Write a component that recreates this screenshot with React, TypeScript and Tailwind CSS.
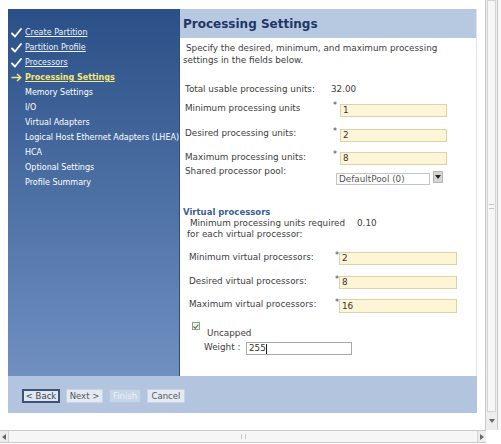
import React from 'react';

const done = ['Create Partition', 'Partition Profile', 'Processors'];
const todo = [
  'Memory Settings',
  'I/O',
  'Virtual Adapters',
  'Logical Host Ethernet Adapters (LHEA)',
  'HCA',
  'Optional Settings',
  'Profile Summary',
];

const Check = () => (
  <svg width="11" height="10" viewBox="0 0 11 10" className="shrink-0">
    <path d="M1 5.5 L4 8.5 L10 1" fill="none" stroke="#ffffff" strokeWidth="1.8" strokeLinecap="round" strokeLinejoin="round" />
  </svg>
);

const Arrow = () => (
  <svg width="11" height="9" viewBox="0 0 11 9" className="shrink-0">
    <path d="M0.5 4.5 H9.5 M6 1 L9.8 4.5 L6 8" fill="none" stroke="#f3e77a" strokeWidth="1.5" strokeLinejoin="round" />
  </svg>
);

const Star = () => <span className="text-[8px] leading-[6px] text-[#444]">*</span>;

export default function App() {
  return (
    <div className="w-[501px] h-[444px] bg-white overflow-hidden flex flex-col" style={{ fontFamily: '"DejaVu Sans", Verdana, sans-serif' }}>
      <div className="flex h-[430px]">
        {/* page */}
        <div className="w-[485px] h-full pl-[8px] pt-[9px] flex flex-col">
          <div className="w-[469px] flex h-[367px]">
            {/* wizard nav */}
            <nav className="w-[172px] shrink-0 h-full bg-gradient-to-b from-[#2a5087] to-[#7090c1] pt-[16px] pl-[3px] text-[8px] leading-[15px] border-r border-[#2c4d7f]">
              {done.map((d) => (
                <div key={d} className="flex items-center h-[15px] gap-[3px]">
                  <Check />
                  <span className="text-[#eef2f8] underline">{d}</span>
                </div>
              ))}
              <div className="flex items-center h-[15px] gap-[3px]">
                <Arrow />
                <span className="text-[#f3e77a] underline font-bold">Processing Settings</span>
              </div>
              {todo.map((d) => (
                <div key={d} className="h-[15px] pl-[14px] text-white whitespace-nowrap">
                  {d}
                </div>
              ))}
            </nav>

            {/* content */}
            <div className="w-[297px] h-full flex flex-col bg-white text-[8.8px] text-[#3c3c3c] border-r border-[#dfe4ea]">
              <div className="h-[29px] bg-[#b7c8e1] pl-[3px] flex items-center">
                <h1 className="text-[12px] font-bold text-[#1d3766] leading-none">Processing Settings</h1>
              </div>

              <div className="flex flex-col">
                <div className="mt-[4px] h-[24px] pl-[3px] leading-[12px]">
                  <div className="pl-[3px]">Specify the desired, minimum, and maximum processing</div>
                  <div>settings in the fields below.</div>
                </div>

                <div className="mt-[17px] h-[12px] pl-[5px] flex leading-[12px]">
                  <div className="w-[146px] shrink-0">Total usable processing units:</div>
                  <div>32.00</div>
                </div>

                <div className="mt-[4px] h-[18px] pl-[5px] grid grid-cols-[148px_7px_107px] items-start">
                  <div className="mt-[3px] leading-[12px] whitespace-nowrap">Minimum processing units</div>
                  <div><Star /></div>
                  <div className="mt-[5px] h-[13px] bg-[#fdf5d6] border border-[#dcd2a8] pl-[2px] flex items-center text-[#333] leading-none">1</div>
                </div>

                <div className="mt-[8px] h-[17px] pl-[5px] grid grid-cols-[148px_7px_107px] items-start">
                  <div className="mt-[2px] leading-[12px] whitespace-nowrap">Desired processing units:</div>
                  <div><Star /></div>
                  <div className="mt-[4px] h-[13px] bg-[#fdf5d6] border border-[#dcd2a8] pl-[2px] flex items-center text-[#333] leading-none">2</div>
                </div>

                <div className="mt-[6px] h-[17px] pl-[5px] grid grid-cols-[148px_7px_107px] items-start">
                  <div className="mt-[3px] leading-[12px] whitespace-nowrap">Maximum processing units:</div>
                  <div><Star /></div>
                  <div className="mt-[4px] h-[13px] bg-[#fdf5d6] border border-[#dcd2a8] pl-[2px] flex items-center text-[#333] leading-none">8</div>
                </div>

                <div className="h-[20px] pl-[5px] flex items-start">
                  <div className="w-[151px] shrink-0 leading-[12px]">Shared processor pool:</div>
                  <div className="mt-[8px] shrink-0 w-[94px] h-[12px] bg-white border border-[#c4c4c4] pl-[2px] flex items-center text-[#555] leading-none">
                    DefaultPool (0)
                  </div>
                  <div className="mt-[6px] ml-[3px] shrink-0 w-[10px] h-[12px] bg-[#d6d6d6] border border-[#b5b5b5] flex items-center justify-center">
                    <svg width="6" height="4" viewBox="0 0 6 4"><path d="M0 0 H6 L3 4 Z" fill="#222" /></svg>
                  </div>
                </div>

                <div className="mt-[21px] h-[12px] pl-[3px] leading-[12px] text-[8.5px] font-bold text-[#3a5f91]">
                  Virtual processors
                </div>

                <div className="h-[22px] pl-[7px] flex leading-[11px]">
                  <div className="w-[170px] shrink-0">
                    <div className="pl-[3px]">Minimum processing units required</div>
                    <div>for each virtual processor:</div>
                  </div>
                  <div>0.10</div>
                </div>

                <div className="mt-[9px] h-[16px] pl-[9px] grid grid-cols-[146px_4px_118px] items-start">
                  <div className="mt-[2px] leading-[12px] whitespace-nowrap">Minimum virtual processors:</div>
                  <div><Star /></div>
                  <div className="mt-[3px] h-[13px] bg-[#fdf5d6] border border-[#dcd2a8] pl-[2px] flex items-center text-[#333] leading-none">2</div>
                </div>

                <div className="mt-[8px] h-[15px] pl-[9px] grid grid-cols-[146px_4px_118px] items-start">
                  <div className="mt-[2px] leading-[12px] whitespace-nowrap">Desired virtual processors:</div>
                  <div><Star /></div>
                  <div className="mt-[3px] h-[13px] bg-[#fdf5d6] border border-[#dcd2a8] pl-[2px] flex items-center text-[#333] leading-none">8</div>
                </div>

                <div className="mt-[8px] h-[17px] pl-[9px] grid grid-cols-[146px_4px_118px] items-start">
                  <div className="mt-[2px] leading-[12px] whitespace-nowrap">Maximum virtual processors:</div>
                  <div><Star /></div>
                  <div className="mt-[3px] h-[14px] bg-[#fdf5d6] border border-[#dcd2a8] pl-[2px] flex items-center text-[#333] leading-none">16</div>
                </div>

                <div className="mt-[9px] h-[17px] pl-[12px] flex items-start">
                  <div className="w-[8px] h-[8px] shrink-0 border border-[#9a9a9a] bg-[#eef3ea] flex items-center justify-center">
                    <svg width="6" height="5" viewBox="0 0 6 5"><path d="M0.5 2.5 L2.3 4.3 L5.5 0.7" fill="none" stroke="#4f8c4f" strokeWidth="1.2" /></svg>
                  </div>
                  <div className="ml-[7px] mt-[5px] leading-[12px]">Uncapped</div>
                </div>

                <div className="mt-[2px] h-[14px] pl-[24px] flex items-start">
                  <div className="w-[42px] shrink-0 leading-[12px]">Weight :</div>
                  <div className="mt-[1px] shrink-0 w-[106px] h-[13px] bg-white border border-[#a8a8a8] pl-[2px] flex items-center text-[#333] leading-none">
                    255<span className="ml-[0.5px] w-px h-[10px] bg-[#222]" />
                  </div>
                </div>
              </div>
            </div>
          </div>

          {/* button bar */}
          <div className="w-[469px] h-[37px] bg-[#b3c5de] pl-[14px] pt-[13px] flex items-start gap-[6px] text-[8.5px] leading-none">
            <button className="w-[38px] h-[14px] bg-[#dfe7f2] border-2 border-[#3c5277] text-[#444] flex items-center justify-center">&lt; Back</button>
            <button className="w-[37px] h-[14px] bg-[#e4eaf3] border border-[#c9d3e2] text-[#555] flex items-center justify-center">Next &gt;</button>
            <button className="w-[32px] h-[14px] bg-[#c6d4e7] border border-[#b9c7db] text-[#eef2f8] flex items-center justify-center">Finish</button>
            <button className="w-[38px] h-[14px] bg-[#e4eaf3] border border-[#c9d3e2] text-[#555] flex items-center justify-center">Cancel</button>
          </div>
        </div>

        {/* vertical scrollbar */}
        <div className="w-[13px] h-full bg-[#ededed] border-x border-[#c9c9c9] flex flex-col">
          <div className="h-[412px] mx-[1px] bg-[#f6f6f6] border border-[#d4d4d4] flex items-center justify-center">
            <div className="w-[5px] h-[5px] border-y border-[#c8c8c8]" />
          </div>
          <div className="flex-1 flex items-center justify-center">
            <svg width="6" height="4" viewBox="0 0 6 4"><path d="M0 0 H6 L3 4 Z" fill="#666" /></svg>
          </div>
        </div>
        <div className="flex-1 bg-[#f7f7f7]" />
      </div>

      {/* horizontal scrollbar */}
      <div className="h-[13px] w-[486px] bg-[#ededed] border-y border-[#c9c9c9] flex items-center">
        <div className="w-[8px] flex items-center justify-center">
          <svg width="4" height="6" viewBox="0 0 4 6"><path d="M4 0 V6 L0 3 Z" fill="#666" /></svg>
        </div>
        <div className="flex-1 h-full bg-[#f6f6f6] border-x border-[#d4d4d4] flex items-center justify-center">
          <div className="w-[5px] h-[5px] border-x border-[#c8c8c8]" />
        </div>
        <div className="w-[8px] flex items-center justify-center">
          <svg width="4" height="6" viewBox="0 0 4 6"><path d="M0 0 V6 L4 3 Z" fill="#666" /></svg>
        </div>
      </div>
    </div>
  );
}
